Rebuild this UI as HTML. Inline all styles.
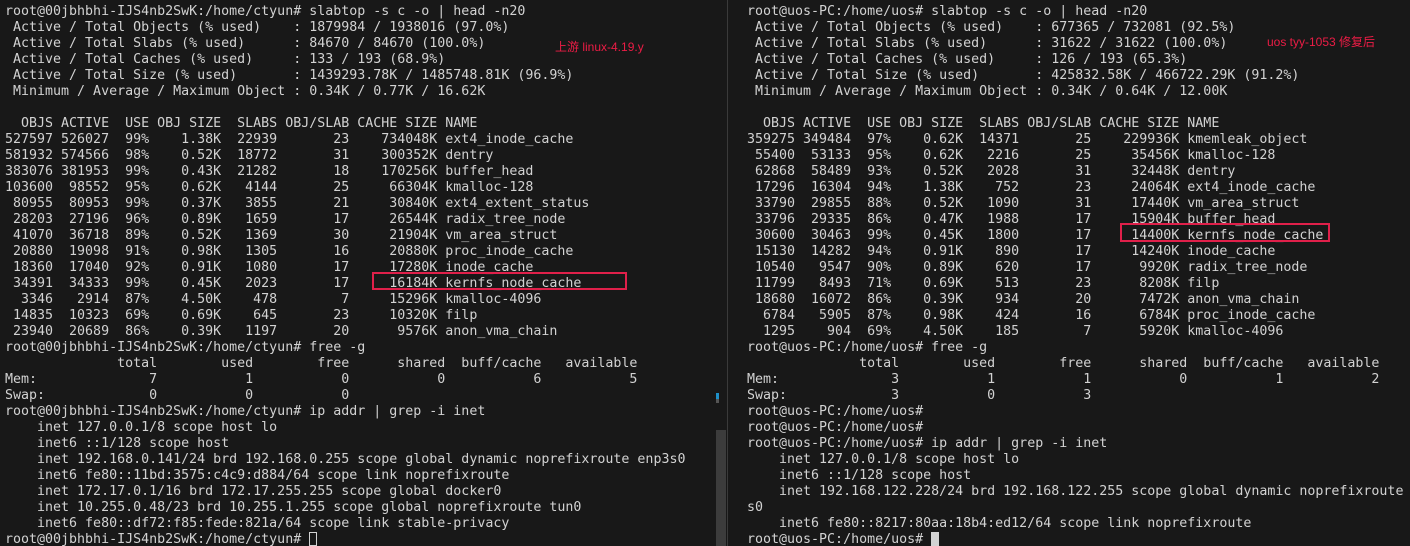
<!DOCTYPE html>
<html><head><meta charset="utf-8"><style>
html,body{margin:0;padding:0;background:#181818;width:1410px;height:546px;overflow:hidden;position:relative}
pre{position:absolute;top:4px;margin:0;font-family:"DejaVu Sans Mono","Liberation Mono",monospace;font-size:13.3px;line-height:16px;color:#d2d2d2;white-space:pre}
#l{left:5px}#r{left:747px}
.sep{position:absolute;left:727px;top:0;width:1px;height:546px;background:#3a3a3a}
.sb{position:absolute;left:716px;top:430px;width:10px;height:116px;background:#3c3c3c}
.lab{position:absolute;font-family:"Liberation Sans","Noto Sans CJK SC",sans-serif;font-size:12px;color:#ec1c45}
.box{position:absolute;border:2px solid #e0204a;box-sizing:border-box}
.cur{display:inline-block;width:8px;height:14px;vertical-align:-3px;box-sizing:border-box}
</style></head><body>
<div class="sep"></div>
<div class="sb"></div>
<div style="position:absolute;left:716px;top:393px;width:3px;height:6px;background:#1e90c8"></div>
<div style="position:absolute;left:716px;top:399px;width:3px;height:4px;background:#555"></div>
<pre id="l">root@00jbhbhi-IJS4nb2SwK:/home/ctyun# slabtop -s c -o | head -n20
 Active / Total Objects (% used)    : 1879984 / 1938016 (97.0%)
 Active / Total Slabs (% used)      : 84670 / 84670 (100.0%)
 Active / Total Caches (% used)     : 133 / 193 (68.9%)
 Active / Total Size (% used)       : 1439293.78K / 1485748.81K (96.9%)
 Minimum / Average / Maximum Object : 0.34K / 0.77K / 16.62K

  OBJS ACTIVE  USE OBJ SIZE  SLABS OBJ/SLAB CACHE SIZE NAME
527597 526027  99%    1.38K  22939       23    734048K ext4_inode_cache
581932 574566  98%    0.52K  18772       31    300352K dentry
383076 381953  99%    0.43K  21282       18    170256K buffer_head
103600  98552  95%    0.62K   4144       25     66304K kmalloc-128
 80955  80953  99%    0.37K   3855       21     30840K ext4_extent_status
 28203  27196  96%    0.89K   1659       17     26544K radix_tree_node
 41070  36718  89%    0.52K   1369       30     21904K vm_area_struct
 20880  19098  91%    0.98K   1305       16     20880K proc_inode_cache
 18360  17040  92%    0.91K   1080       17     17280K inode_cache
 34391  34333  99%    0.45K   2023       17     16184K kernfs_node_cache
  3346   2914  87%    4.50K    478        7     15296K kmalloc-4096
 14835  10323  69%    0.69K    645       23     10320K filp
 23940  20689  86%    0.39K   1197       20      9576K anon_vma_chain
root@00jbhbhi-IJS4nb2SwK:/home/ctyun# free -g
              total        used        free      shared  buff/cache   available
Mem:              7           1           0           0           6           5
Swap:             0           0           0
root@00jbhbhi-IJS4nb2SwK:/home/ctyun# ip addr | grep -i inet
    inet 127.0.0.1/8 scope host lo
    inet6 ::1/128 scope host
    inet 192.168.0.141/24 brd 192.168.0.255 scope global dynamic noprefixroute enp3s0
    inet6 fe80::11bd:3575:c4c9:d884/64 scope link noprefixroute
    inet 172.17.0.1/16 brd 172.17.255.255 scope global docker0
    inet 10.255.0.48/23 brd 10.255.1.255 scope global noprefixroute tun0
    inet6 fe80::df72:f85:fede:821a/64 scope link stable-privacy
root@00jbhbhi-IJS4nb2SwK:/home/ctyun# <span class="cur" style="border:1px solid #d2d2d2"></span></pre>
<pre id="r">root@uos-PC:/home/uos# slabtop -s c -o | head -n20
 Active / Total Objects (% used)    : 677365 / 732081 (92.5%)
 Active / Total Slabs (% used)      : 31622 / 31622 (100.0%)
 Active / Total Caches (% used)     : 126 / 193 (65.3%)
 Active / Total Size (% used)       : 425832.58K / 466722.29K (91.2%)
 Minimum / Average / Maximum Object : 0.34K / 0.64K / 12.00K

  OBJS ACTIVE  USE OBJ SIZE  SLABS OBJ/SLAB CACHE SIZE NAME
359275 349484  97%    0.62K  14371       25    229936K kmemleak_object
 55400  53133  95%    0.62K   2216       25     35456K kmalloc-128
 62868  58489  93%    0.52K   2028       31     32448K dentry
 17296  16304  94%    1.38K    752       23     24064K ext4_inode_cache
 33790  29855  88%    0.52K   1090       31     17440K vm_area_struct
 33796  29335  86%    0.47K   1988       17     15904K buffer_head
 30600  30463  99%    0.45K   1800       17     14400K kernfs_node_cache
 15130  14282  94%    0.91K    890       17     14240K inode_cache
 10540   9547  90%    0.89K    620       17      9920K radix_tree_node
 11799   8493  71%    0.69K    513       23      8208K filp
 18680  16072  86%    0.39K    934       20      7472K anon_vma_chain
  6784   5905  87%    0.98K    424       16      6784K proc_inode_cache
  1295    904  69%    4.50K    185        7      5920K kmalloc-4096
root@uos-PC:/home/uos# free -g
              total        used        free      shared  buff/cache   available
Mem:              3           1           1           0           1           2
Swap:             3           0           3
root@uos-PC:/home/uos#
root@uos-PC:/home/uos#
root@uos-PC:/home/uos# ip addr | grep -i inet
    inet 127.0.0.1/8 scope host lo
    inet6 ::1/128 scope host
    inet 192.168.122.228/24 brd 192.168.122.255 scope global dynamic noprefixroute
s0
    inet6 fe80::8217:80aa:18b4:ed12/64 scope link noprefixroute
root@uos-PC:/home/uos# <span class="cur" style="background:#d2d2d2"></span></pre>
<div class="lab" style="left:555px;top:38px">上游 linux-4.19.y</div>
<div class="lab" style="left:1267px;top:33px">uos tyy-1053 修复后</div>
<div class="box" style="left:372px;top:272px;width:255px;height:18px"></div>
<div class="box" style="left:1120px;top:223px;width:210px;height:19px"></div>
</body></html>
